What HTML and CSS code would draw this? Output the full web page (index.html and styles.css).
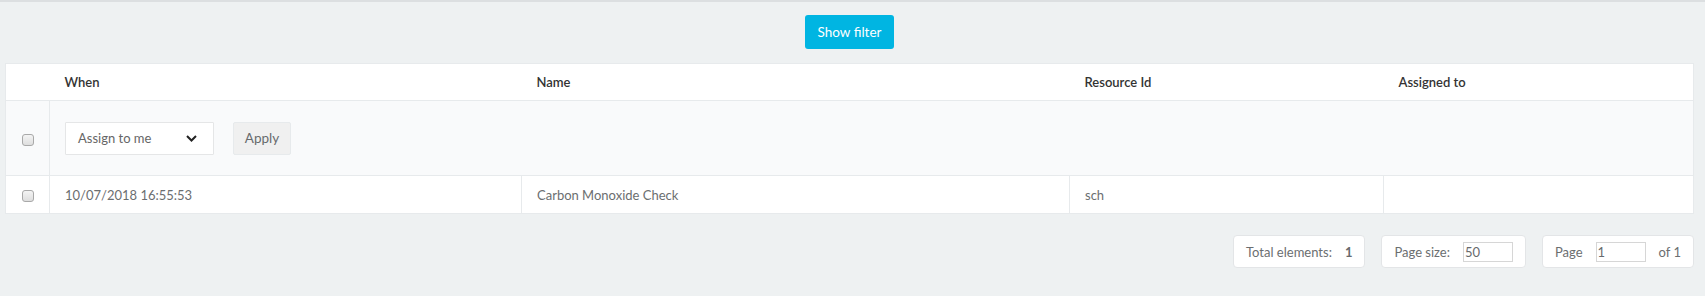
FILE: index.html
```html
<!DOCTYPE html>
<html>
<head>
    <title>Tasks</title>
    <link rel="stylesheet" href="styles.css">
</head>
<body>
    <div class="page">
        <div class="toolbar">
            <button class="btn-filter">Show filter</button>
        </div>

        <table class="grid">
            <colgroup>
                <col class="col-check">
                <col class="col-when">
                <col class="col-name">
                <col class="col-resource">
                <col class="col-assigned">
            </colgroup>
            <thead>
                <tr class="head-row">
                    <th></th>
                    <th>When</th>
                    <th>Name</th>
                    <th>Resource Id</th>
                    <th>Assigned to</th>
                </tr>
            </thead>
            <tbody>
                <tr class="bulk-row">
                    <td class="check-cell"><input type="checkbox" class="check"></td>
                    <td colspan="4" class="bulk-cell">
                        <div class="bulk-actions">
                            <div class="select">
                                <span>Assign to me</span>
                                <svg width="11" height="7" viewBox="0 0 11 7">
                                    <path d="M1 1 L5.5 5.5 L10 1" fill="none" stroke="#222" stroke-width="2"/>
                                </svg>
                            </div>
                            <button class="btn-apply">Apply</button>
                        </div>
                    </td>
                </tr>
                <tr class="data-row">
                    <td class="check-cell"><input type="checkbox" class="check"></td>
                    <td>10/07/2018 16:55:53</td>
                    <td>Carbon Monoxide Check</td>
                    <td>sch</td>
                    <td></td>
                </tr>
            </tbody>
        </table>

        <div class="pager">
            <div class="pager-box">
                <span>Total elements:</span>
                <strong>1</strong>
            </div>
            <div class="pager-box">
                <span>Page size:</span>
                <input type="text" class="pager-input" value="50">
            </div>
            <div class="pager-box">
                <span>Page</span>
                <input type="text" class="pager-input" value="1">
                <span>of 1</span>
            </div>
        </div>
    </div>
</body>
</html>
```

FILE: styles.css
```css
body {
    margin: 0;
    background-color: #eef1f2;
    font-family: Lato, "Open Sans", sans-serif;
    font-size: 13px;
    color: #6b6e70;
    height: 296px;
}
.page {
    border-top: 2px solid #dcdfe1;
    padding: 13px 11px 0 5px;
}
.toolbar {
    display: flex;
    justify-content: center;
    margin-bottom: 14px;
}
.btn-filter {
    width: 89px;
    height: 34px;
    background-color: #00b5e2;
    color: #fff;
    border: none;
    border-radius: 3px;
    font-family: inherit;
    font-size: 13.5px;
    padding: 0;
}
.grid {
    width: 100%;
    border-collapse: collapse;
    table-layout: fixed;
    background-color: #fff;
    border: 1px solid #e7eaec;
}
.col-check { width: 44px; }
.col-when { width: 472px; }
.col-name { width: 548px; }
.col-resource { width: 314px; }
.grid th {
    text-align: left;
    font-weight: 600;
    color: #333;
    height: 36px;
    padding: 0 15px;
    border-bottom: 1px solid #e7eaec;
}
.grid td {
    padding: 0 15px;
}
.check-cell {
    text-align: center;
    border-right: 1px solid #e7eaec;
}
.grid td.check-cell {
    padding: 0;
}
.check {
    appearance: none;
    -webkit-appearance: none;
    width: 12px;
    height: 12px;
    margin: 0;
    border: 1px solid #a9a9a9;
    border-radius: 3px;
    background: linear-gradient(#f4f4f4, #dedede);
    vertical-align: middle;
}
.bulk-row {
    background-color: #f9fafb;
    height: 75px;
    border-bottom: 1px solid #e7eaec;
}
.bulk-actions {
    display: flex;
    align-items: center;
    gap: 19px;
}
.select {
    width: 149px;
    height: 33px;
    box-sizing: border-box;
    border: 1px solid #e5e6e7;
    background-color: #fff;
    display: flex;
    align-items: center;
    justify-content: space-between;
    padding: 0 16px 0 12px;
    border-radius: 1px;
}
.select span {
    color: #666;
}
.btn-apply {
    width: 58px;
    height: 33px;
    background-color: #f0f0f0;
    border: 1px solid #e7eaec;
    color: #676a6c;
    font-family: inherit;
    font-size: 13.5px;
    border-radius: 2px;
    padding: 0;
}
.data-row {
    height: 38px;
}
.data-row td {
    border-right: 1px solid #e7eaec;
}
.pager {
    display: flex;
    justify-content: flex-end;
    gap: 16px;
    margin-top: 21px;
}
.pager-box {
    height: 33px;
    box-sizing: border-box;
    background-color: #fff;
    border: 1px solid #e3e5e7;
    border-radius: 4px;
    display: flex;
    align-items: center;
    gap: 13px;
    padding: 0 12px 0 12px;
}
.pager-box strong {
    color: #676a6c;
}
.pager-input {
    width: 50px;
    height: 20px;
    box-sizing: border-box;
    border: 1px solid #d6d6d6;
    font-family: inherit;
    font-size: 13px;
    color: #676a6c;
    padding: 0 1px;
}
```
